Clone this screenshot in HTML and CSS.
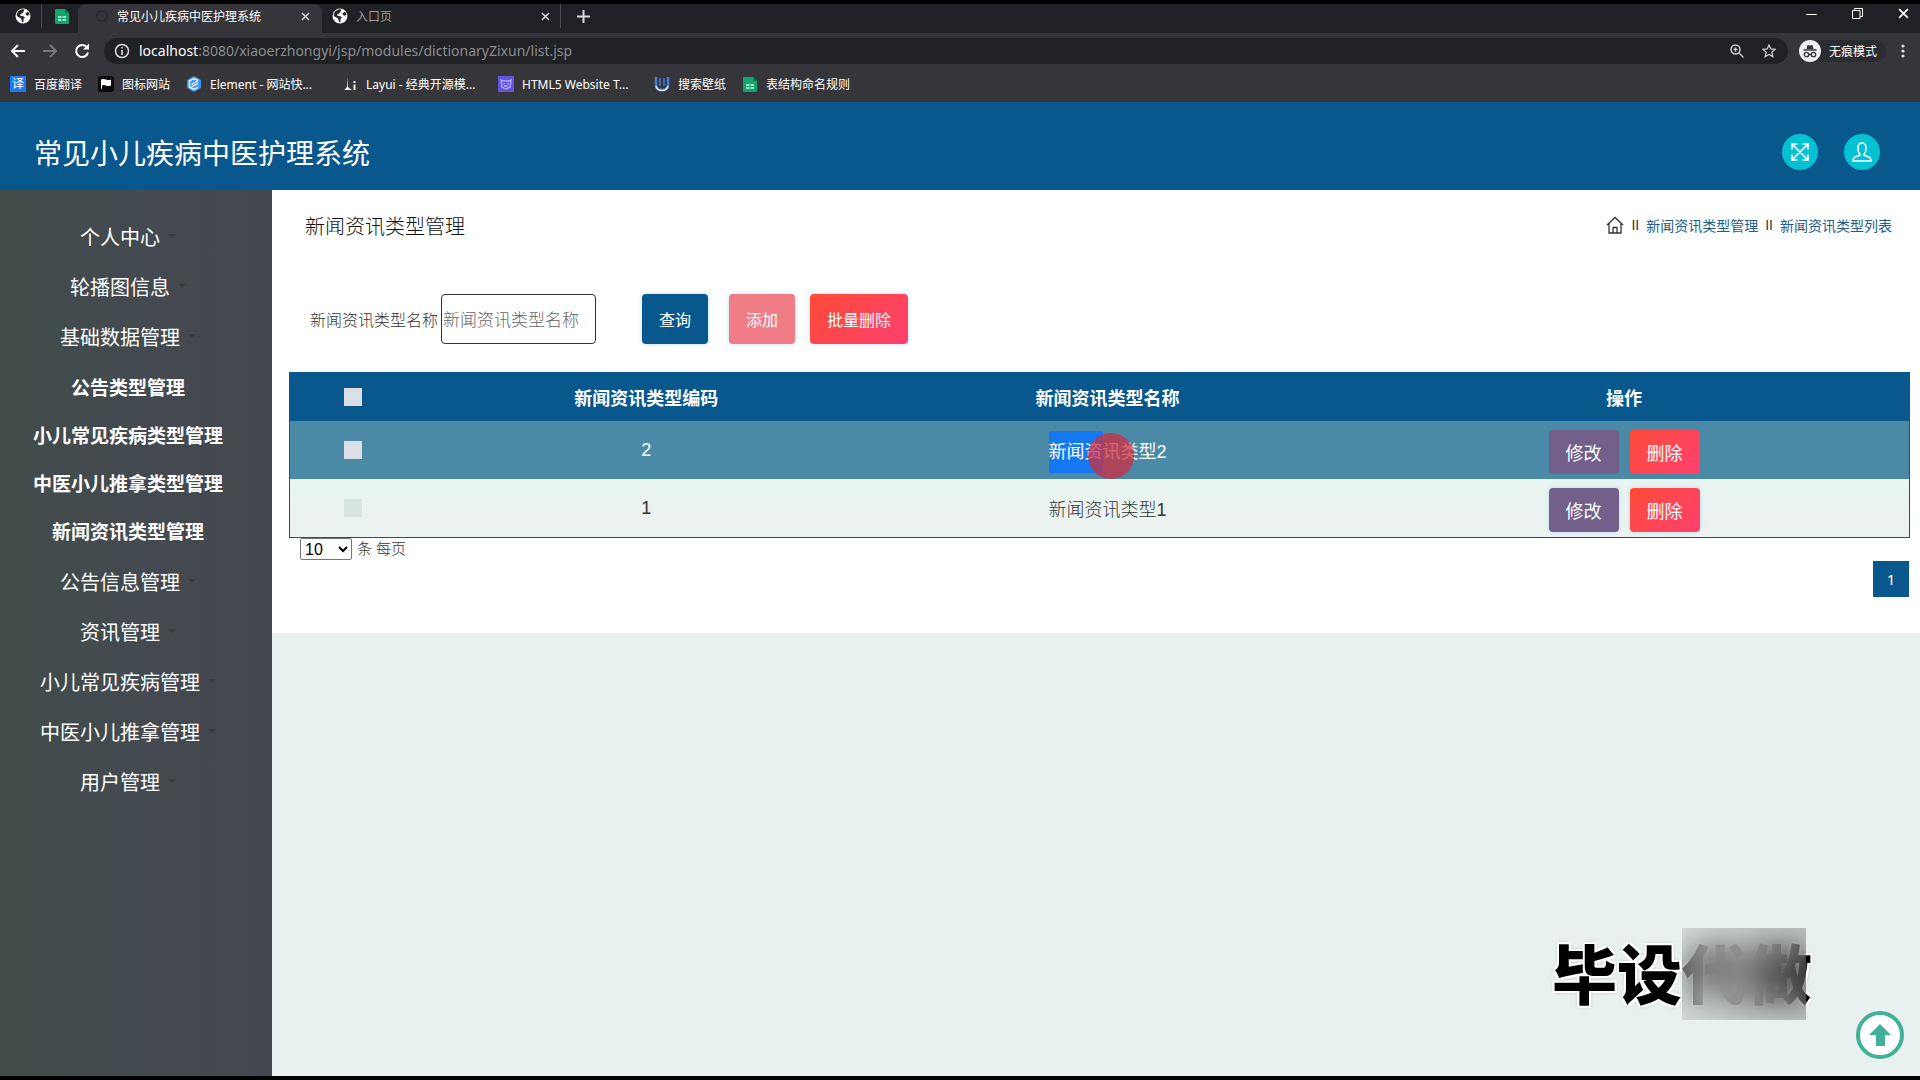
FILE: index.html
```html
<!DOCTYPE html>
<html lang="zh-CN">
<head>
    <meta charset="UTF-8">
    <meta name="viewport" content="width=device-width, initial-scale=1.0">
    <title>常见小儿疾病中医护理系统</title>
    <link rel="stylesheet" href="styles.css">
</head>
<body>
    <svg class="defs" width="0" height="0" aria-hidden="true">
        <symbol id="globe" viewBox="0 0 16 16">
            <circle cx="8" cy="8" r="7.5" fill="#fff"/>
            <path d="M1.500 7q1 2 3 2.500T6.500 12l1 2.500Q9 14 8.500 12T10 9.500Q9 8 7 8T5 6.500Q7 6 8 4.500T9.500 1.500Q8 1 6.500 1.500T3 3.500zM10.500 5.500q1-2 3-1.500l1 2.500q-1 1.500-2.500 1t-1.500-2z" fill="#26282b"/>
        </symbol>
        <symbol id="sheet" viewBox="0 0 16 16">
            <path d="M2 1h9l4 4v10a1 1 0 0 1-1 1H2a1 1 0 0 1-1-1V2a1 1 0 0 1 1-1z" fill="#13a56b"/>
            <path d="M11 1l4 4h-4z" fill="#0b7d50"/>
            <path d="M4 9h3.500M8.500 9H12M4 12h3.500M8.500 12H12" stroke="#d8f5e8" stroke-width="1.500"/>
        </symbol>
        <symbol id="cross" viewBox="0 0 10 10">
            <path d="M1 1l8 8M9 1l-8 8" stroke="currentColor" stroke-width="1.500"/>
        </symbol>
    </svg>

    <div class="browser">
        <div class="tab-strip">
            <span class="pinned"><svg width="16" height="16"><use href="#globe"/></svg></span>
            <span class="pinned pinned-sheet"><svg width="16" height="16"><use href="#sheet"/></svg></span>
            <div class="tab active">
                <svg class="loading" width="14" height="14" viewBox="0 0 14 14"><circle cx="7" cy="7" r="5" fill="none" stroke="#2b2c2f" stroke-width="2"/></svg>
                <span class="tab-title">常见小儿疾病中医护理系统</span>
                <button class="icon-btn" aria-label="关闭"><svg width="9" height="9"><use href="#cross"/></svg></button>
            </div>
            <div class="tab">
                <svg width="16" height="16"><use href="#globe"/></svg>
                <span class="tab-title">入口页</span>
                <button class="icon-btn" aria-label="关闭"><svg width="9" height="9"><use href="#cross"/></svg></button>
            </div>
            <button class="icon-btn new-tab" aria-label="新标签页"><svg width="13" height="13" viewBox="0 0 13 13"><path d="M6.500 0v13M0 6.500h13" stroke="currentColor" stroke-width="2"/></svg></button>
            <div class="window-controls">
                <button class="icon-btn" aria-label="最小化"><svg width="11" height="11" viewBox="0 0 11 11"><path d="M0 6.500h11" stroke="currentColor"/></svg></button>
                <button class="icon-btn" aria-label="还原"><svg width="11" height="11" viewBox="0 0 11 11"><path d="M.5 2.500h7.500v8H.5zM2.500 2.500v-2h8v8h-2.500" fill="none" stroke="currentColor"/></svg></button>
                <button class="icon-btn" aria-label="关闭窗口"><svg width="11" height="11"><use href="#cross"/></svg></button>
            </div>
        </div>

        <div class="toolbar">
            <div class="nav-btns">
                <button class="icon-btn" aria-label="后退"><svg width="16" height="16" viewBox="0 0 16 16"><path d="M15 8H2M8 2L2 8l6 6" fill="none" stroke="#fff" stroke-width="2"/></svg></button>
                <button class="icon-btn" aria-label="前进"><svg width="16" height="16" viewBox="0 0 16 16"><path d="M1 8h13M8 2l6 6-6 6" fill="none" stroke="#77797c" stroke-width="2"/></svg></button>
                <button class="icon-btn" aria-label="刷新"><svg width="16" height="16" viewBox="0 0 16 16"><path d="M13 4.500A6 6 0 1 0 14 9.500" fill="none" stroke="#fff" stroke-width="2"/><path d="M15 .5v6H9z" fill="#fff"/></svg></button>
            </div>
            <div class="omnibox">
                <svg width="16" height="16" viewBox="0 0 16 16"><circle cx="8" cy="8" r="6.500" fill="none" stroke="#ddd" stroke-width="1.500"/><path d="M8 7v5M8 4v1.500" stroke="#ddd" stroke-width="1.600"/></svg>
                <span class="url"><b>localhost</b>:8080/xiaoerzhongyi/jsp/modules/dictionaryZixun/list.jsp</span>
                <button class="icon-btn" aria-label="缩放"><svg width="14" height="14" viewBox="0 0 14 14"><circle cx="5.500" cy="5.500" r="4.500" fill="none" stroke="#ccc" stroke-width="1.500"/><path d="M9 9l4.500 4.500M3.500 5.500h4M5.500 3.500v4" stroke="#ccc" stroke-width="1.400"/></svg></button>
                <button class="icon-btn" aria-label="收藏"><svg width="14" height="14" viewBox="0 0 14 14"><path d="M7 1l1.800 4 4.200.4-3.200 2.900 1 4.300L7 10.400l-3.800 2.200 1-4.300L1 5.400 5.200 5z" fill="none" stroke="#ccc" stroke-width="1.300"/></svg></button>
            </div>
            <div class="incognito">
                <svg width="22" height="22" viewBox="0 0 22 22"><circle cx="11" cy="11" r="11" fill="#eef0f3"/><path d="M7.500 9l1-4 2.500.6L13.500 5l1 4z" fill="#34363a"/><path d="M4.500 10h13M9.500 14.500h3" stroke="#34363a" stroke-width="1.300"/><circle cx="7.500" cy="14.500" r="2.200" fill="none" stroke="#34363a" stroke-width="1.300"/><circle cx="14.500" cy="14.500" r="2.200" fill="none" stroke="#34363a" stroke-width="1.300"/></svg>
                <span>无痕模式</span>
            </div>
            <button class="icon-btn menu-btn" aria-label="菜单"><svg width="4" height="14" viewBox="0 0 4 14"><circle cx="2" cy="2" r="1.600" fill="#ddd"/><circle cx="2" cy="7" r="1.600" fill="#ddd"/><circle cx="2" cy="12" r="1.600" fill="#ddd"/></svg></button>
        </div>

        <nav class="bookmarks">
            <a href="#"><span class="fav-trans">译</span><span>百度翻译</span></a>
            <a href="#"><svg width="16" height="16" viewBox="0 0 16 16"><rect width="16" height="16" rx="3" fill="#0c0c0c"/><path d="M3 13V3.500q2.500-1 5 0t5 0v6q-2.500 1-5 0t-4 0V13z" fill="#fff"/></svg><span>图标网站</span></a>
            <a href="#"><svg width="16" height="16" viewBox="0 0 16 16"><path d="M8 0l7 4v8l-7 4-7-4V4z" fill="#3d96f5"/><path d="M12 4.500L8 2.500 3.500 5v6L8 13.500l4-2.200M5.500 8.500L12 5M5.500 11l6.500-3.500" fill="none" stroke="#fff" stroke-width="1.400"/></svg><span class="long">Element - 网站快...</span></a>
            <a href="#"><svg width="16" height="16" viewBox="0 0 16 16"><path d="M6 1v10l4 3H2l3-3z" fill="#eee"/><path d="M12.500 5v2M12.500 8.500V14" stroke="#eee" stroke-width="2"/></svg><span class="long">Layui - 经典开源模...</span></a>
            <a href="#"><svg width="16" height="16" viewBox="0 0 16 16"><rect width="16" height="16" fill="#6155d8"/><path d="M3 4l2 1h6l2-1-1 7-4 2-4-2z" fill="none" stroke="#b5acff" stroke-width="1.300"/><path d="M6 7v1.500M10 7v1.500M6 10h4" stroke="#d2ccff"/></svg><span class="long">HTML5 Website T...</span></a>
            <a href="#"><svg width="16" height="16" viewBox="0 0 16 16"><path d="M2 1v8q0 5 6 5t6-5V1" fill="none" stroke="#4a7fd8" stroke-width="2.500"/><path d="M6 2v8M10 2v8" stroke="#4a7fd8" stroke-width="1.500"/><path d="M2 10q1 4.500 6 4.500t6-4.500" fill="none" stroke="#dbe9ff" stroke-width="1.500"/></svg><span>搜索壁纸</span></a>
            <a href="#"><svg width="16" height="16"><use href="#sheet"/></svg><span>表结构命名规则</span></a>
        </nav>
    </div>

    <header class="header">
        <h1>常见小儿疾病中医护理系统</h1>
        <div class="header-btns">
            <button class="round-btn" aria-label="全屏"><svg width="20" height="20" viewBox="0 0 20 20"><path d="M2 7.500V2h5.500M12.500 2H18v5.500M18 12.500V18h-5.500M7.500 18H2v-5.500M3 3l14 14M17 3L3 17" fill="none" stroke="#fff" stroke-width="1.700"/></svg></button>
            <button class="round-btn" aria-label="用户"><svg width="20" height="20" viewBox="0 0 20 20"><path d="M8 12.200C6.500 11 6 9 6 6q0-5 4-5t4 5c0 3-.5 5-2 6.200v1l5 1.800q2 1 2 4H1q0-3 2-4l5-1.800z" fill="none" stroke="#fff" stroke-width="1.500"/></svg></button>
        </div>
    </header>

    <div class="layout">
        <nav class="sidebar">
            <ul class="menu">
                <li><a href="#">个人中心</a></li>
                <li><a href="#">轮播图信息</a></li>
                <li>
                    <a href="#">基础数据管理</a>
                    <ul class="submenu">
                        <li><a href="#">公告类型管理</a></li>
                        <li><a href="#">小儿常见疾病类型管理</a></li>
                        <li><a href="#">中医小儿推拿类型管理</a></li>
                        <li><a href="#">新闻资讯类型管理</a></li>
                    </ul>
                </li>
                <li><a href="#">公告信息管理</a></li>
                <li><a href="#">资讯管理</a></li>
                <li><a href="#">小儿常见疾病管理</a></li>
                <li><a href="#">中医小儿推拿管理</a></li>
                <li><a href="#">用户管理</a></li>
            </ul>
        </nav>

        <main class="main">
            <section class="panel">
                <div class="title-row">
                    <h2>新闻资讯类型管理</h2>
                    <div class="breadcrumb">
                        <svg width="18" height="18" viewBox="0 0 18 18"><path d="M1 9l8-7.500L17 9M3 7.500v9.500h12V7.500M7 17v-5.500h4V17" fill="none" stroke="#333" stroke-width="1.300"/></svg>
                        <span class="sep">II</span>
                        <a href="#">新闻资讯类型管理</a>
                        <span class="sep">II</span>
                        <a href="#">新闻资讯类型列表</a>
                    </div>
                </div>

                <form class="search">
                    <label for="type-name">新闻资讯类型名称</label>
                    <input type="text" id="type-name" placeholder="新闻资讯类型名称">
                    <button type="button" class="btn btn-search">查询</button>
                    <button type="button" class="btn btn-add">添加</button>
                    <button type="button" class="btn btn-danger">批量删除</button>
                </form>

                <table>
                    <thead>
                        <tr>
                            <th class="col-check"><input type="checkbox" aria-label="全选"></th>
                            <th class="col-code">新闻资讯类型编码</th>
                            <th class="col-name">新闻资讯类型名称</th>
                            <th>操作</th>
                        </tr>
                    </thead>
                    <tbody>
                        <tr class="hover">
                            <td><input type="checkbox" aria-label="选择 2"></td>
                            <td>2</td>
                            <td><span class="cell-text"><mark>新闻资</mark>讯类型2<i class="pointer"></i></span></td>
                            <td class="actions"><button class="btn btn-edit">修改</button><button class="btn btn-danger">删除</button></td>
                        </tr>
                        <tr>
                            <td><input type="checkbox" aria-label="选择 1"></td>
                            <td>1</td>
                            <td>新闻资讯类型1</td>
                            <td class="actions"><button class="btn btn-edit">修改</button><button class="btn btn-danger">删除</button></td>
                        </tr>
                    </tbody>
                </table>

                <div class="page-size">
                    <select id="page-size"><option>10</option><option>25</option><option>50</option></select>
                    <label for="page-size">条 每页</label>
                </div>
                <div class="pagination"><button class="page">1</button></div>
            </section>
        </main>
    </div>

    <div class="watermark">毕设代做<span class="mosaic"></span></div>
    <button class="to-top" aria-label="返回顶部"><svg width="22" height="22" viewBox="0 0 22 22"><path d="M11 0l11 11h-6v11H7V11H0z" fill="#41b094"/></svg></button>
</body>
</html>
```
FILE: styles.css
```css
* {
    box-sizing: border-box;
}
body {
    margin: 0;
    min-height: 100vh;
    display: flex;
    flex-direction: column;
    border-top: 4px solid #000;
    border-bottom: 4px solid #000;
    background: #e9f1f0;
    font-family: "Noto Sans", "Noto Sans CJK SC", sans-serif;
}
button, input, select {
    font-family: inherit;
}
a {
    color: inherit;
    text-decoration: none;
}
.defs {
    position: absolute;
}

/* browser */
.browser {
    background: #36363a;
    color: #fff;
    font-size: 12px;
}
.icon-btn {
    display: flex;
    align-items: center;
    justify-content: center;
    padding: 0;
    border: none;
    background: none;
    color: #ddd;
}
.tab-strip {
    display: flex;
    align-items: flex-start;
    height: 29px;
    background: #202124;
}
.pinned {
    display: flex;
    align-items: center;
    justify-content: center;
    width: 42px;
    height: 24px;
    padding-left: 4px;
    border-right: 1px solid #4c4d50;
}
.pinned-sheet {
    width: 36px;
    border: none;
}
.tab {
    display: flex;
    align-items: center;
    gap: 8px;
    width: 239px;
    height: 24px;
    padding: 0 10px;
    border-right: 1px solid #4c4d50;
    color: #9b9ca0;
}
.tab.active {
    width: 244px;
    height: 29px;
    padding: 0 12px 5px 17px;
    border: none;
    border-radius: 8px 8px 0 0;
    background: #36363a;
    color: #fff;
}
.tab-title {
    flex: 1;
}
.new-tab {
    height: 24px;
    margin-left: 16px;
}
.window-controls {
    display: flex;
    margin-left: auto;
}
.window-controls .icon-btn {
    width: 46px;
    height: 18px;
    color: #fff;
}
.window-controls .icon-btn:last-child {
    margin-right: -6px;
}
.toolbar {
    display: flex;
    align-items: center;
    height: 35px;
}
.nav-btns {
    display: flex;
    gap: 16px;
    padding: 0 14px 0 10px;
}
.omnibox {
    flex: 1;
    display: flex;
    align-items: center;
    gap: 9px;
    height: 26px;
    padding: 0 12px 0 10px;
    border-radius: 13px;
    background: #202125;
}
.omnibox .icon-btn {
    margin-left: 9px;
}
.url {
    flex: 1;
    font-size: 14px;
    color: #8d8e91;
}
.url b {
    font-weight: 400;
    color: #fff;
}
.incognito {
    display: flex;
    align-items: center;
    gap: 8px;
    margin-left: 11px;
    padding-right: 9px;
    border-radius: 11px;
    background: #2b2c30;
}
.menu-btn {
    width: 34px;
}
.bookmarks {
    display: flex;
    align-items: center;
    gap: 16px;
    height: 34px;
    padding: 0 10px 2px;
}
.bookmarks a {
    display: flex;
    align-items: center;
    gap: 8px;
    white-space: nowrap;
}
.long {
    width: 116px;
}
.fav-trans {
    width: 16px;
    line-height: 16px;
    background: #1c7bf0;
    text-align: center;
}

/* header */
.header {
    display: flex;
    align-items: center;
    justify-content: space-between;
    height: 88px;
    padding: 12px 40px 0 34px;
    background: #08588e;
    color: #fff;
}
.header h1 {
    margin: 0;
    font-size: 28px;
    font-weight: 400;
}
.header-btns {
    display: flex;
    gap: 26px;
}
.round-btn {
    display: flex;
    align-items: center;
    justify-content: center;
    width: 36px;
    height: 36px;
    padding: 0;
    border: none;
    border-radius: 50%;
    background: #04c2d4;
}

/* layout */
.layout {
    flex: 1;
    display: flex;
}
.sidebar {
    flex: none;
    width: 272px;
    padding-top: 21px;
    background: linear-gradient(90deg, #404c49, #434a50 50%, #44474f);
    color: #fff;
}
.menu, .submenu {
    margin: 0;
    padding: 0;
    list-style: none;
    text-align: center;
}
.menu > li > a {
    display: flex;
    align-items: center;
    justify-content: center;
    gap: 8px;
    height: 50px;
    padding-right: 32px;
    font-size: 20px;
}
/* caret on the right, same width on the left keeps the text centred */
.menu > li > a::before, .menu > li > a::after {
    content: "";
    border: 4px solid transparent;
    border-bottom: none;
}
.menu > li > a::after {
    border-top-color: #343a40;
}
.submenu {
    padding-top: 3px;
}
.submenu a {
    display: block;
    padding-right: 16px;
    font-size: 19px;
    font-weight: 700;
    line-height: 48px;
}
.main {
    flex: 1;
}
.panel {
    padding: 0 10px 36px 17px;
    background: #fff;
    color: #333;
}
.title-row {
    display: flex;
    align-items: center;
    justify-content: space-between;
    height: 70px;
    padding: 0 18px 0 16px;
}
.title-row h2 {
    margin: 0;
    color: #111;
    font-size: 20px;
    font-weight: 300;
}
.breadcrumb {
    display: flex;
    align-items: center;
    gap: 7px;
    font-size: 14px;
}
.breadcrumb a {
    color: #1d5d8a;
}
.sep {
    font-family: "Liberation Sans", Arial, sans-serif;
}
.search {
    display: flex;
    align-items: center;
    height: 50px;
    margin: 34px 0 28px;
    padding-left: 21px;
}
.search label {
    font-size: 16px;
    font-weight: 300;
}
.search input {
    width: 155px;
    height: 50px;
    margin: 0 46px 0 3px;
    padding: 0 1px;
    border: 1px solid #333;
    border-radius: 4px;
    font-size: 17px;
    font-weight: 300;
}
.search input::placeholder {
    color: #666;
}
.btn {
    height: 50px;
    padding: 0 17px;
    border: none;
    border-radius: 4px;
    color: #fff;
    font-size: 16px;
    box-shadow: 0 0 5px #b9dcf0;
}
.btn-search {
    margin-right: 21px;
    background: #08588e;
}
.btn-add {
    margin-right: 15px;
    background: #f07c86;
}
.btn-danger {
    background: linear-gradient(135deg, #ff4b37, #fd4070);
}
.btn-edit {
    background: #72608a;
}

table {
    width: 100%;
    table-layout: fixed;
    border-collapse: separate;
    border-spacing: 0;
    border: 1px solid #08588e;
    font-family: "Liberation Sans", "Noto Sans CJK SC", sans-serif;
    font-size: 18px;
    text-align: center;
}
th {
    height: 48px;
    padding: 0;
    background: #08588e;
    color: #fff;
    font-weight: 700;
}
td {
    height: 58px;
    padding: 0;
    background: linear-gradient(#e8f5f0, #edf2f1);
    font-weight: 300;
}
.hover td {
    background: #4a8aa6;
    color: #fff;
    font-weight: 400;
}
.col-check {
    width: 7.8%;
}
.col-code {
    width: 28.4%;
}
.col-name {
    width: 28.6%;
}
table input {
    display: block;
    appearance: none;
    width: 18px;
    height: 18px;
    margin: 0 auto;
    background: #dcdfe6;
}
tbody tr:last-child input {
    background: #d8e4df;
}
.cell-text {
    position: relative;
}
mark {
    padding: 11px 0;
    background: #1478f0;
    color: #fff;
}
.pointer {
    position: absolute;
    top: -9px;
    left: 39px;
    width: 46px;
    height: 46px;
    border-radius: 50%;
    background: rgba(205, 45, 65, .75);
}
.actions {
    padding-top: 4px;
}
.actions .btn {
    height: 44px;
    font-size: 18px;
    vertical-align: middle;
}
.hover .btn {
    box-shadow: none;
}
.btn-edit {
    margin-right: 11px;
}

.page-size {
    display: flex;
    align-items: flex-start;
    gap: 5px;
    height: 23px;
    padding-left: 11px;
    font-size: 15px;
    font-weight: 300;
    line-height: 20px;
}
.page-size select {
    width: 52px;
    height: 22px;
    padding: 0;
    border: 1px solid #767676;
    border-radius: 2px;
    background: #fff;
    font-family: "Liberation Sans", Arial, sans-serif;
    font-size: 16px;
}
.pagination {
    display: flex;
    justify-content: flex-end;
    padding-right: 1px;
}
.page {
    width: 36px;
    height: 36px;
    border: none;
    background: #08588e;
    color: #fff;
    font-size: 15px;
}

/* floating */
.watermark {
    position: fixed;
    right: 108px;
    bottom: 60px;
    color: #000;
    font-size: 65px;
    font-weight: 900;
    line-height: 92px;
    text-shadow: 2px 2px 0 #fff, -2px -2px 0 #fff, 2px -2px 0 #fff, -2px 2px 0 #fff, 0 0 4px #777;
}
.mosaic {
    position: absolute;
    top: 0;
    right: 6px;
    width: 124px;
    height: 92px;
    background: linear-gradient(90deg, rgba(170, 170, 170, .3), rgba(110, 110, 110, .35));
    backdrop-filter: blur(16px);
}
.to-top {
    position: fixed;
    right: 16px;
    bottom: 21px;
    display: flex;
    align-items: center;
    justify-content: center;
    width: 48px;
    height: 48px;
    padding: 0;
    border: 4px solid #41b094;
    border-radius: 50%;
    background: #fff;
}
```
